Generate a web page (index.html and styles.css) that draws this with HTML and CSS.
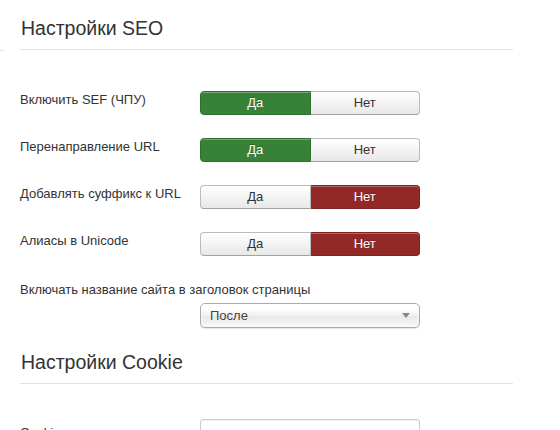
FILE: index.html
```html
<!DOCTYPE html>
<html lang="ru">
<head>
<meta charset="utf-8">
<title>Настройки SEO</title>
<link rel="stylesheet" href="styles.css">
</head>
<body>
<div class="page">
  <section class="fieldset seo">
    <h2 class="legend">Настройки SEO</h2>
    <div class="row">
      <div class="label">Включить SEF (ЧПУ)</div>
      <div class="toggle">
        <span class="btn yes on">Да</span><span class="btn no">Нет</span>
      </div>
    </div>
    <div class="row">
      <div class="label">Перенаправление URL</div>
      <div class="toggle">
        <span class="btn yes on">Да</span><span class="btn no">Нет</span>
      </div>
    </div>
    <div class="row">
      <div class="label">Добавлять суффикс к URL</div>
      <div class="toggle">
        <span class="btn yes">Да</span><span class="btn no on">Нет</span>
      </div>
    </div>
    <div class="row">
      <div class="label">Алиасы в Unicode</div>
      <div class="toggle">
        <span class="btn yes">Да</span><span class="btn no on">Нет</span>
      </div>
    </div>
    <div class="row stacked">
      <div class="label wide">Включать название сайта в заголовок страницы</div>
      <div class="select">
        <span class="select-text">После</span>
        <span class="arrow"></span>
      </div>
    </div>
  </section>
  <section class="fieldset cookie">
    <h2 class="legend">Настройки Cookie</h2>
    <div class="row input-row">
      <div class="label">Cookie домен</div>
      <div class="text-input"></div>
    </div>
  </section>
</div>
</body>
</html>
```

FILE: styles.css
```css
html, body {
  margin: 0;
  padding: 0;
  background: #fff;
}
body {
  font-family: "Liberation Sans", Arial, sans-serif;
  font-size: 13px;
  color: #333;
  overflow: hidden;
  height: 430px;
}
.page {
  padding: 17px 0 0 0;
}
.fieldset {
  background: linear-gradient(#e3e3e3, #e3e3e3) no-repeat 0 33px / 4px 1px;
}
.fieldset.cookie {
  background-position: 0 -100px;
}
.legend {
  margin: 0 47px 0 20px;
  padding: 0 0 0 1px;
  height: 33px;
  box-sizing: border-box;
  border-bottom: 1px solid #e3e3e3;
  font-size: 19.5px;
  font-weight: normal;
  line-height: 22px;
  color: #333;
}
.seo .legend {
  margin-bottom: 41px;
}
.row {
  display: flex;
  align-items: flex-start;
  padding-left: 20px;
  margin-bottom: 23px;
}
.label {
  width: 180px;
  line-height: 18px;
  padding-top: 0;
}
.toggle {
  display: flex;
  width: 220px;
  height: 24px;
}
.btn {
  flex: 1;
  box-sizing: border-box;
  height: 24px;
  line-height: 22px;
  text-align: center;
  color: #333;
  border: 1px solid #bbb;
  border-bottom-color: #a2a2a2;
  background: linear-gradient(#ffffff, #e8e8e8);
  box-shadow: inset 0 1px 0 rgba(255,255,255,0.3);
}
.btn.yes {
  border-radius: 4px 0 0 4px;
}
.btn.no {
  border-radius: 0 4px 4px 0;
  border-left: none;
}
.btn.yes.on {
  background: #378237;
  border-color: #2f6f2f;
  color: #fff;
  text-shadow: 0 -1px 0 rgba(0,0,0,0.25);
}
.btn.no.on {
  background: #932926;
  border-color: #7d2220;
  color: #fff;
  text-shadow: 0 -1px 0 rgba(0,0,0,0.25);
}
.row.stacked {
  flex-direction: column;
  margin-bottom: 23px;
}
.label.wide {
  width: auto;
  margin-bottom: 4px;
  margin-top: 2px;
}
.select {
  margin-left: 180px;
  width: 220px;
  height: 25px;
  box-sizing: border-box;
  border: 1px solid #aaa;
  border-radius: 5px;
  background: linear-gradient(#ffffff 20%, #f0f0f0 50%, #e8e8e8 52%, #f8f8f8);
  display: flex;
  align-items: center;
  justify-content: space-between;
  padding: 0 9px 0 9px;
  box-shadow: 0 0 3px #fff inset, 0 1px 1px rgba(0,0,0,0.1);
}
.select-text {
  line-height: 23px;
  color: #444;
}
.arrow {
  width: 0;
  height: 0;
  border-left: 4px solid transparent;
  border-right: 4px solid transparent;
  border-top: 5px solid #888;
}
.cookie .legend {
  margin-bottom: 35px;
}
.input-row .label {
  padding-top: 5px;
}
.text-input {
  width: 220px;
  height: 26px;
  box-sizing: border-box;
  border: 1px solid #ccc;
  border-radius: 3px;
  background: #fff;
  box-shadow: inset 0 1px 1px rgba(0,0,0,0.075);
}
```
